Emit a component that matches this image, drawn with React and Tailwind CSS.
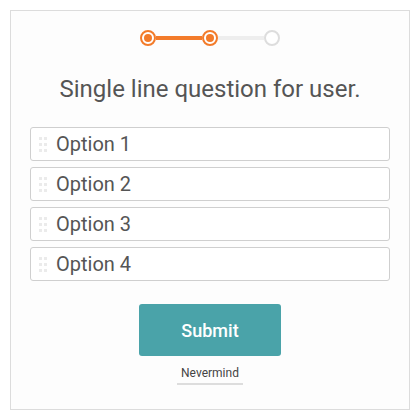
const options = ['Option 1', 'Option 2', 'Option 3', 'Option 4'];

const DragHandle = () => (
  <div className="grid grid-cols-2 gap-x-[2px] gap-y-[3px] w-[8px] shrink-0">
    {[0, 1, 2, 3, 4, 5].map((i) => (
      <span key={i} className="block w-[3px] h-[3px] bg-[#ebebeb]" />
    ))}
  </div>
);

const Step = ({ state }) => {
  if (state === 'done') {
    return (
      <div className="w-[16px] h-[16px] rounded-full border-2 border-[#f37b2a] bg-white flex items-center justify-center shrink-0">
        <div className="w-[8px] h-[8px] rounded-full bg-[#f37b2a]" />
      </div>
    );
  }
  return <div className="w-[16px] h-[16px] rounded-full border-2 border-[#dddddd] bg-white shrink-0" />;
};

export default function App() {
  return (
    <div className="w-[420px] h-[420px] bg-white p-[10px]" style={{ fontFamily: 'Roboto, sans-serif' }}>
      <div className="w-[400px] h-[400px] border border-[#dcdcdc] bg-[#fdfdfd] flex flex-col items-center">
        {/* Stepper */}
        <div className="flex items-center mt-[19px]">
          <Step state="done" />
          <div className="w-[46px] h-[4px] bg-[#f37b2a]" />
          <Step state="done" />
          <div className="w-[46px] h-[4px] bg-[#eeeeee]" />
          <Step state="todo" />
        </div>

        <h1 className="mt-[28px] text-[24px] leading-[30px] text-[#555555]">
          Single line question for user.
        </h1>

        {/* Options */}
        <div className="mt-[23px] w-[360px] flex flex-col gap-[6px]">
          {options.map((opt) => (
            <div
              key={opt}
              className="h-[34px] border border-[#cfcfcf] rounded-[3px] bg-white flex items-center pl-[8px]"
            >
              <DragHandle />
              <span className="ml-[9px] text-[20px] text-[#555555]">{opt}</span>
            </div>
          ))}
        </div>

        <button className="mt-[23px] w-[142px] h-[52px] rounded-[3px] bg-[#4aa3a9] text-white text-[18px] font-medium">
          Submit
        </button>

        <button className="mt-[10px] text-[12px] leading-[14px] text-[#444444] px-[4px] pb-[3px] border-b-2 border-[#dddddd]">
          Nevermind
        </button>
      </div>
    </div>
  );
}
